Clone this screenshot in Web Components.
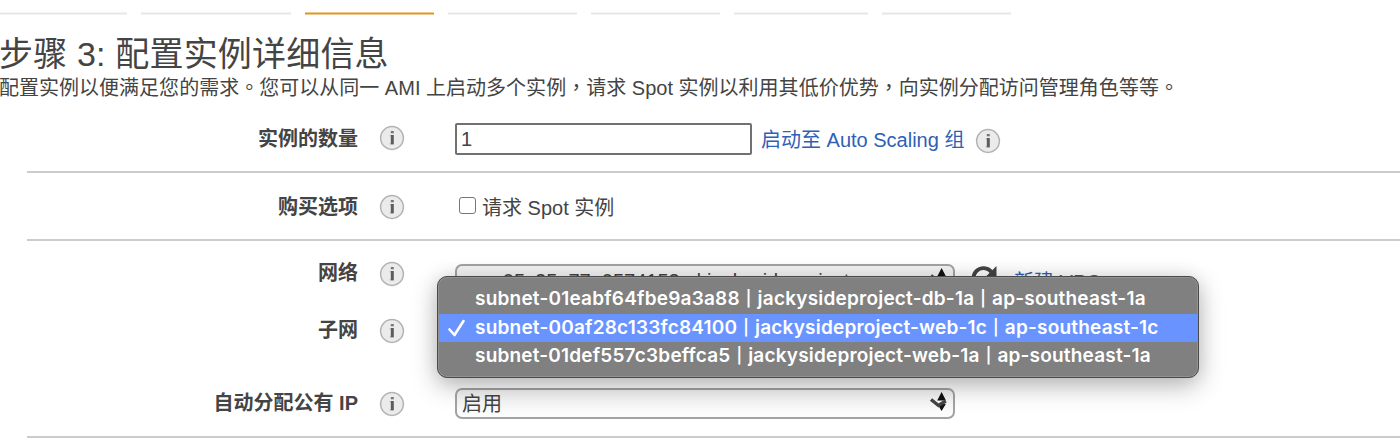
<!DOCTYPE html>
<html lang="zh-CN">
<head>
<meta charset="utf-8">
<title>配置实例详细信息</title>
<style>
html,body{margin:0;height:441px;overflow:hidden;background:#fff}
body{font-family:"Liberation Sans","Noto Sans CJK SC",sans-serif;font-size:20px;color:#444}
</style>
</head>
<body>
<launch-wizard></launch-wizard>
<script>
const define = (name, html, after) => customElements.define(name, class extends HTMLElement {
  connectedCallback() {
    if (this.shadowRoot) return;
    this.attachShadow({mode: 'open'}).innerHTML = html;
    if (after) after(this, this.shadowRoot);
  }
});

define('info-icon', `<style>
:host{display:block;width:26px;height:26px}
svg{display:block}
</style>
<svg width="26" height="26" viewBox="0 0 26 26"><circle cx="13" cy="13" r="11.4" fill="#ebebeb" stroke="#b3b3b3" stroke-width="1.5"/><path d="M11.8 6h3v2.3h-3z" fill="#777"/><path d="M11.8 10h3v9.4h-3z" fill="#5c5c5c"/><path d="M10.8 10h1v1.5h-1zM10.8 18h1v1.4h-1z" fill="#aaa"/></svg>`);

define('step-bar', `<style>
:host{display:block;box-sizing:border-box;height:3px;background:linear-gradient(#f3f3f3 0 1px,#e6e6e6 1px 2px,#f3f3f3 2px)}
:host([active]){background:linear-gradient(#f2c98e 0 .7px,#e2902a .7px 2.2px,#f2c98e 2.2px)}
</style>`);

define('form-row', `<style>
:host{display:flex;box-sizing:border-box;height:var(--h);margin-left:27px;align-items:flex-start}
:host([ruled]){border-bottom:2px solid #ccc}
.label{width:331px;flex:none;text-align:right;font-weight:700;line-height:28px;padding-top:var(--lt)}
info-icon{flex:none;margin-left:21px;margin-top:var(--it)}
.content{display:flex;align-items:flex-start;margin-left:50px;padding-top:var(--ct)}
</style><div class="label"><slot name="label"></slot></div><info-icon></info-icon><div class="content"><slot></slot></div>`);

define('text-field', `<style>
:host{display:block;box-sizing:border-box;width:297px;height:32px;border:2px solid #717171;border-radius:2px;padding-left:4px;line-height:29px;background:#fff}
</style><slot></slot>`);

define('check-box', `<style>
:host{display:flex;align-items:center;height:28px;line-height:28px}
i{box-sizing:border-box;width:17px;height:17px;border:1.5px solid #767676;border-radius:3px;margin:0 6px 6px 4px}
</style><i></i><slot></slot>`);

define('select-box', `<style>
:host{display:flex;box-sizing:border-box;width:500px;height:31px;border:2px solid #a3a3a3;border-radius:7px;padding:0 4px 0 5px;justify-content:space-between;line-height:28px;white-space:pre;background:linear-gradient(#f2f2f2,#fdfdfd)}
span{padding:var(--pad,0)}
svg{display:block;margin-top:2px}
</style><span><slot></slot></span><svg width="20" height="22" viewBox="0 0 20 22"><path d="M12.6 0 17 8.5H8.2zM8.4 12h8.4l-4.2 7z" fill="#111"/><path d="M2 7.5 9.5 13.5 16.8 9" fill="none" stroke="#444" stroke-width="3.4"/></svg>`);

define('refresh-icon', `<style>:host{display:block;width:26px;height:26px}svg{display:block}</style>
<svg width="26" height="26" viewBox="0 0 26 26"><path d="M21.5 18.5A10 10 0 1 1 20.5 8" fill="none" stroke="#444" stroke-width="3.8"/><path d="M25.5 2v11H14.5z" fill="#444"/></svg>`);

define('text-link', `<style>:host{display:block;color:#2f5fb6;line-height:28px;white-space:nowrap}</style><slot></slot>`);

define('menu-item', `<style>
:host{display:flex;align-items:center;height:28.5px;padding-left:8px;color:#fff;font:600 19px/28px Inter,sans-serif;white-space:nowrap}
:host([selected]){background:#6994ff}
.mark{width:28px;flex:none;display:flex}
svg{visibility:hidden}
:host([selected]) svg{visibility:visible}
.text{display:block;width:max-content}
.bar{font-size:15.5px;padding:0 1px;font-weight:600;line-height:1;vertical-align:1px}
</style><div class="mark"><svg width="20" height="20" viewBox="0 0 20 20"><path d="M2.5 11.5 7.5 17 16.5 3" fill="none" stroke="#fff" stroke-width="2.6" stroke-linecap="round" stroke-linejoin="round"/></svg></div><span class="text"></span>`,
(el, root) => {
  const s = root.querySelector('.text'), n = el.textContent.length;
  s.innerHTML = el.textContent.replace(/\|/g, '<span class="bar">|</span>');
  s.style.letterSpacing = ((+el.getAttribute('width') - s.offsetWidth) / n) + 'px';
});

define('popup-menu', `<style>
:host{display:block;box-sizing:border-box;width:762px;height:102px;padding:8px 1px;border:1px solid #4a4a4a;border-radius:10px;background:#808080;box-shadow:inset 0 0 0 1px #929292,0 8px 26px rgba(0,0,0,.28),0 0 18px rgba(0,0,0,.08)}
</style><slot></slot>`);

define('launch-wizard', `<style>
:host{display:block;position:relative;height:441px;overflow:hidden}
.steps{display:grid;grid-template-columns:127px 150px 129px 129px 129px 134px 129px;column-gap:14px;padding-top:12px}
h1{margin:18px 0 0 -1px;font-size:34px;font-weight:400;line-height:43px;white-space:nowrap;letter-spacing:.18px}
p{margin:-3px 0 2px -1px;line-height:30px;white-space:nowrap;letter-spacing:.015px}
i{font-style:normal;font-family:"Noto Sans CJK TC",sans-serif;line-height:1}
popup-menu{position:absolute;left:437px;top:276px}
.link{margin-left:9px}.tail{margin-left:11px;margin-top:3px}
refresh-icon{margin:0 0 0 16px}.vpc{margin:4px 0 0 17px}
</style>
<div class="steps"><step-bar></step-bar><step-bar></step-bar><step-bar active></step-bar><step-bar></step-bar><step-bar></step-bar><step-bar></step-bar><step-bar></step-bar></div>
<h1>步骤 3: 配置实例详细信息</h1>
<p>配置实例以便满足您的需求<i lang="zh-TW">。</i>您可以从同一 AMI 上启动多个实例<i lang="zh-TW">，</i>请求 Spot 实例以利用其低价优势<i lang="zh-TW">，</i>向实例分配访问管理角色等等<i lang="zh-TW">。</i></p>
<form-row ruled style="--h:68px;--lt:20px;--it:20px;--ct:18px"><span slot="label">实例的数量</span><text-field>1</text-field><text-link class="link" style="padding-top:3px">启动至 Auto Scaling 组</text-link><info-icon class="tail" style="padding-top:2px"></info-icon></form-row>
<form-row ruled style="--h:68px;--lt:20px;--it:21px;--ct:21px"><span slot="label">购买选项</span><check-box>请求 Spot 实例</check-box></form-row>
<form-row style="--h:57px;--lt:18px;--it:20px;--ct:23px"><span slot="label">网络</span><select-box style="--pad:1px 0 0 3px">vpc-05c25a77e0574153a | jackysideproject</select-box><refresh-icon></refresh-icon><text-link class="vpc">新建 VPC</text-link></form-row>
<form-row style="--h:72px;--lt:18px;--it:20px;--ct:20px"><span slot="label">子网</span></form-row>
<form-row ruled style="--h:68px;--lt:19px;--it:21px;--ct:18px"><span slot="label">自动分配公有 IP</span><select-box>启用</select-box></form-row>
<popup-menu><menu-item width="671">subnet-01eabf64fbe9a3a88 | jackysideproject-db-1a | ap-southeast-1a</menu-item><menu-item selected width="684">subnet-00af28c133fc84100 | jackysideproject-web-1c | ap-southeast-1c</menu-item><menu-item width="676">subnet-01def557c3beffca5 | jackysideproject-web-1a | ap-southeast-1a</menu-item></popup-menu>`);
</script>
</body>
</html>
